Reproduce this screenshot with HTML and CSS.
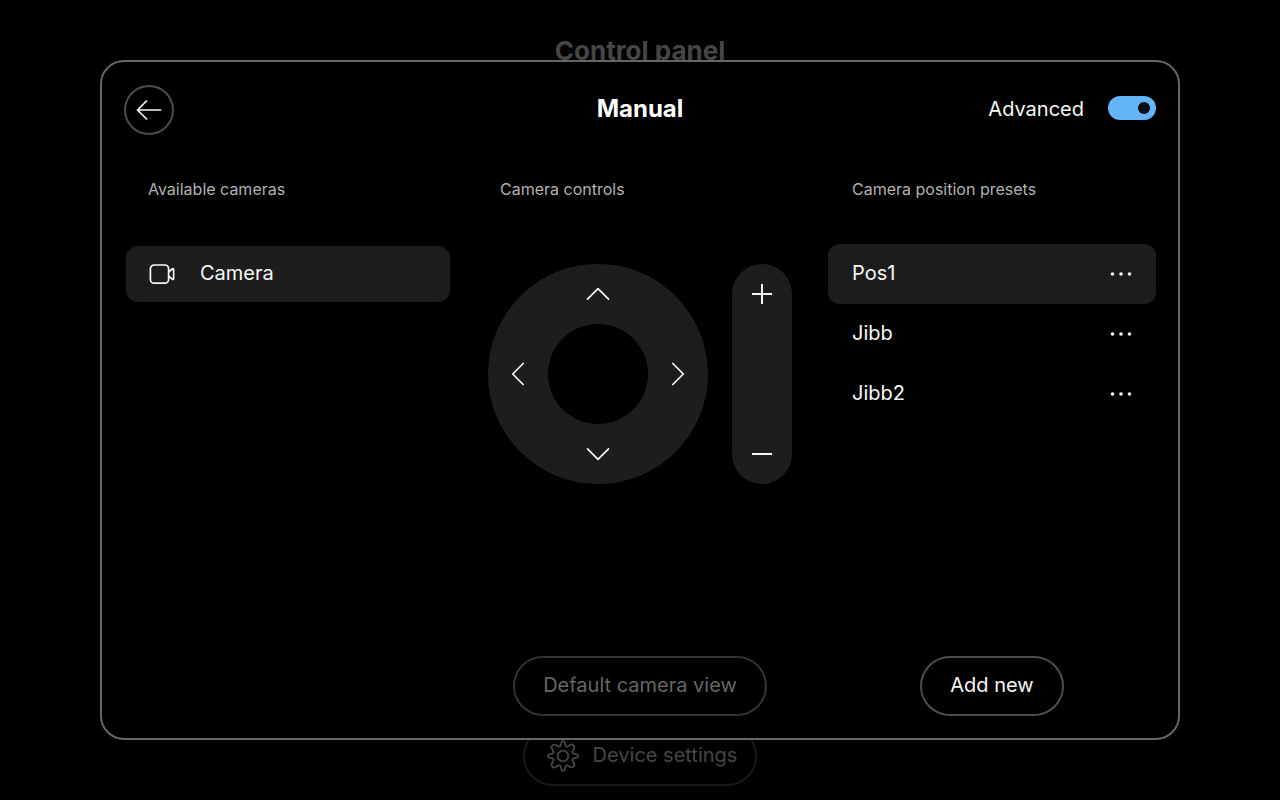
FILE: index.html
```html
<!DOCTYPE html>
<html lang="en">
<head>
<meta charset="utf-8">
<meta name="viewport" content="width=device-width, initial-scale=1">
<title>Camera control</title>
<link rel="stylesheet" href="styles.css">
</head>
<body>
<main class="home">
  <h1 class="home-title">Control panel</h1>
  <button class="home-button" type="button">
    <svg width="32" height="32" viewBox="0 0 32 32" fill="none" stroke="currentColor" stroke-width="1.8" stroke-linejoin="round" aria-hidden="true">
      <circle cx="16" cy="16" r="5.3"/>
      <path d="M14.2 3.2Q14.6 1 16 1T17.8 3.2L18.3 5.2Q19 7.4 21 6.3L23.2 5Q25.2 3.8 26.6 5.4T27 8.8L25.7 11Q24.6 13 26.8 13.7L28.8 14.2Q31 14.6 31 16T28.8 17.8L26.8 18.3Q24.6 19 25.7 21L27 23.2Q28.2 25.2 26.6 26.6T23.2 27L21 25.7Q19 24.6 18.3 26.8L17.8 28.8Q17.4 31 16 31T14.2 28.8L13.7 26.8Q13 24.6 11 25.7L8.8 27Q6.8 28.2 5.4 26.6T5 23.2L6.3 21Q7.4 19 5.2 18.3L3.2 17.8Q1 17.4 1 16T3.2 14.2L5.2 13.7Q7.4 13 6.3 11L5 8.8Q3.8 6.8 5.4 5.4T8.8 5L11 6.3Q13 7.4 13.7 5.2Z"/>
    </svg>
    <span class="button-text">Device settings</span>
  </button>
</main>

<div class="overlay">
  <section class="dialog" role="dialog" aria-labelledby="dialog-title">
    <header class="dialog-header">
      <button class="back" type="button" aria-label="Back">
        <svg width="26" height="22" viewBox="0 0 26 22" fill="none" stroke="currentColor" stroke-width="1.7" stroke-linecap="round" stroke-linejoin="round" aria-hidden="true"><path d="M24.5 11H1.5M10.5 2L1.5 11L10.5 20"/></svg>
      </button>
      <h2 class="dialog-title" id="dialog-title">Manual</h2>
      <label class="switch" for="advanced">
        Advanced
        <input class="switch-input" id="advanced" type="checkbox" role="switch" checked>
      </label>
    </header>

    <div class="columns">
      <section class="column">
        <h3 class="column-title">Available cameras</h3>
        <button class="camera" type="button">
          <svg width="28" height="24" viewBox="0 0 28 24" fill="none" stroke="currentColor" stroke-width="1.7" stroke-linejoin="round" aria-hidden="true">
            <rect x="2.4" y="3" width="18.2" height="18.2" rx="3.8"/>
            <path d="M20.6 10L24.2 7Q25.6 6.2 25.6 7.6V16.6Q25.6 18 24.2 17.2L20.6 14.2"/>
          </svg>
          <span class="button-text">Camera</span>
        </button>
      </section>

      <section class="column">
        <h3 class="column-title">Camera controls</h3>
        <div class="controls">
          <div class="dial">
            <button class="dial-key dial-up" type="button" aria-label="Tilt up">
              <svg class="glyph" viewBox="0 0 24 24" aria-hidden="true"><path d="M1.5 17.2L12 6.7L22.5 17.2"/></svg>
            </button>
            <button class="dial-key dial-left" type="button" aria-label="Pan left">
              <svg class="glyph" viewBox="0 0 24 24" aria-hidden="true"><path d="M17.2 1.5L6.7 12L17.2 22.5"/></svg>
            </button>
            <span class="dial-hub"></span>
            <button class="dial-key dial-right" type="button" aria-label="Pan right">
              <svg class="glyph" viewBox="0 0 24 24" aria-hidden="true"><path d="M6.8 1.5L17.3 12L6.8 22.5"/></svg>
            </button>
            <button class="dial-key dial-down" type="button" aria-label="Tilt down">
              <svg class="glyph" viewBox="0 0 24 24" aria-hidden="true"><path d="M1.5 6.8L12 17.3L22.5 6.8"/></svg>
            </button>
          </div>
          <div class="zoom">
            <button class="zoom-key" type="button" aria-label="Zoom in">
              <svg class="glyph glyph-bold" viewBox="0 0 24 24" aria-hidden="true"><path d="M2 12H22M12 2V22"/></svg>
            </button>
            <button class="zoom-key" type="button" aria-label="Zoom out">
              <svg class="glyph glyph-bold" viewBox="0 0 24 24" aria-hidden="true"><path d="M2 12H22"/></svg>
            </button>
          </div>
        </div>
        <div class="column-footer">
          <button class="pill" type="button" disabled><span class="button-text">Default camera view</span></button>
        </div>
      </section>

      <section class="column">
        <h3 class="column-title">Camera position presets</h3>
        <ul class="presets">
          <li class="preset preset-active">
            <button class="preset-name" type="button"><span class="button-text">Pos1</span></button>
            <button class="preset-more" type="button" aria-label="Options for Pos1">
              <svg width="22" height="24" viewBox="0 0 22 24" fill="currentColor" aria-hidden="true"><circle cx="2.5" cy="12" r="1.8"/><circle cx="11" cy="12" r="1.8"/><circle cx="19.5" cy="12" r="1.8"/></svg>
            </button>
          </li>
          <li class="preset">
            <button class="preset-name" type="button"><span class="button-text">Jibb</span></button>
            <button class="preset-more" type="button" aria-label="Options for Jibb">
              <svg width="22" height="24" viewBox="0 0 22 24" fill="currentColor" aria-hidden="true"><circle cx="2.5" cy="12" r="1.8"/><circle cx="11" cy="12" r="1.8"/><circle cx="19.5" cy="12" r="1.8"/></svg>
            </button>
          </li>
          <li class="preset">
            <button class="preset-name" type="button"><span class="button-text">Jibb2</span></button>
            <button class="preset-more" type="button" aria-label="Options for Jibb2">
              <svg width="22" height="24" viewBox="0 0 22 24" fill="currentColor" aria-hidden="true"><circle cx="2.5" cy="12" r="1.8"/><circle cx="11" cy="12" r="1.8"/><circle cx="19.5" cy="12" r="1.8"/></svg>
            </button>
          </li>
        </ul>
        <div class="column-footer">
          <button class="pill" type="button"><span class="button-text">Add new</span></button>
        </div>
      </section>
    </div>
  </section>
</div>
</body>
</html>
```
FILE: styles.css
```css
* {
  box-sizing: border-box;
}

body {
  margin: 0;
  background: #000;
  color: #f7f7f7;
  font-family: Inter, "Liberation Sans", sans-serif;
  font-size: 20px;
  line-height: 24px;
}

button {
  margin: 0;
  padding: 0;
  border: 0;
  background: none;
  color: inherit;
  font: inherit;
  cursor: pointer;
}

svg {
  display: block;
  flex: none;
}

h1,
h2,
h3,
ul {
  margin: 0;
  padding: 0;
}

.button-text {
  display: block;
  padding-bottom: 2px;
}

.home {
  display: flex;
  flex-direction: column;
  align-items: center;
  justify-content: space-between;
  min-height: 100vh;
  padding: 35px 24px 14px;
  color: #464646;
}

.home-title {
  font-size: 26px;
  line-height: 32px;
  font-weight: 700;
}

.home-button {
  display: flex;
  align-items: center;
  gap: 14px;
  height: 60px;
  padding: 0 18px 0 22px;
  border: 2px solid #191919;
  border-radius: 30px;
}

/* Modal layer above the home screen */
.overlay {
  position: fixed;
  inset: 0;
  display: flex;
  padding: 60px 100px;
}

.dialog {
  display: flex;
  flex: 1;
  flex-direction: column;
  padding: 23px 22px 22px;
  border: 2px solid #666;
  border-radius: 24px;
  background: #000;
}

.dialog-header {
  display: grid;
  grid-template-columns: 1fr auto 1fr;
  align-items: start;
}

.back {
  display: flex;
  align-items: center;
  justify-content: center;
  width: 50px;
  height: 50px;
  border: 2px solid #4d4d4d;
  border-radius: 50%;
}

.dialog-title {
  padding-top: 12px;
  color: #fff;
  font-size: 24px;
  line-height: 24px;
  font-weight: 700;
}

.switch {
  display: flex;
  align-items: flex-start;
  justify-self: end;
  gap: 24px;
  padding-top: 11px;
  line-height: 26px;
  cursor: pointer;
}

.switch-input {
  display: flex;
  align-items: center;
  width: 48px;
  height: 24px;
  margin: 0;
  padding: 0 6px;
  border-radius: 12px;
  background: #666;
  appearance: none;
}

.switch-input::before {
  content: "";
  width: 12px;
  height: 12px;
  border-radius: 50%;
  background: #0a0f14;
}

.switch-input:checked {
  justify-content: flex-end;
  background: #64b4fa;
}

.columns {
  display: grid;
  flex: 1;
  grid-template-columns: repeat(3, minmax(0, 1fr));
  gap: 24px;
  padding-top: 42px;
}

.column {
  display: flex;
  flex-direction: column;
}

.column-title {
  padding: 0 24px;
  margin-bottom: 43px;
  color: #b2b2b2;
  font-size: 16px;
  line-height: 24px;
  font-weight: 400;
}

.column-footer {
  display: flex;
  justify-content: center;
  margin-top: auto;
}

.camera {
  display: flex;
  align-items: center;
  gap: 24px;
  height: 56px;
  margin: 2px;
  padding: 0 22px;
  border-radius: 12px;
  background: #1d1d1d;
}

.controls {
  display: flex;
  justify-content: center;
  gap: 24px;
  padding-top: 20px;
}

.dial {
  display: grid;
  grid-template-areas:
    ". up ."
    "left hub right"
    ". down .";
  grid-template-columns: 60px 100px 60px;
  grid-template-rows: 60px 100px 60px;
  border-radius: 50%;
  background: #1d1d1d;
}

.dial-key,
.zoom-key {
  display: flex;
  align-items: center;
  justify-content: center;
}

.dial-up {
  grid-area: up;
}

.dial-left {
  grid-area: left;
}

.dial-right {
  grid-area: right;
}

.dial-down {
  grid-area: down;
}

.dial-hub {
  grid-area: hub;
  border-radius: 50%;
  background: #000;
}

.glyph {
  width: 24px;
  height: 24px;
  fill: none;
  stroke: currentColor;
  stroke-width: 1.7;
  stroke-linecap: round;
  stroke-linejoin: round;
}

.glyph-bold {
  stroke-width: 2;
  stroke-linecap: butt;
}

.zoom {
  display: flex;
  flex-direction: column;
  justify-content: space-between;
  border-radius: 30px;
  background: #1d1d1d;
}

.zoom-key {
  width: 60px;
  height: 60px;
}

.presets {
  list-style: none;
}

.preset {
  display: flex;
  height: 60px;
  border-radius: 12px;
}

.preset-active {
  background: #1d1d1d;
}

.preset-name {
  flex: 1;
  padding: 0 24px;
  text-align: left;
}

.preset-more {
  padding: 0 24px;
}

.pill {
  height: 60px;
  padding: 0 28px;
  border: 2px solid #4d4d4d;
  border-radius: 30px;
}

.pill:disabled {
  border-color: #333;
  color: #666;
  cursor: default;
}
```
